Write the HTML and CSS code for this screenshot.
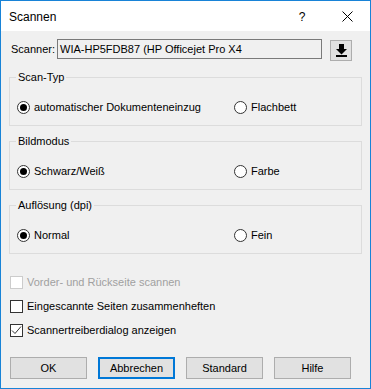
FILE: index.html
```html
<!DOCTYPE html>
<html>
<head>
<meta charset="utf-8">
<link rel="stylesheet" href="styles.css">
</head>
<body>
<div class="window">
  <div class="titlebar">
    <span class="title">Scannen</span>
    <span class="help">?</span>
    <span class="close">
      <svg width="11" height="11" viewBox="0 0 11 11"><path d="M0.5 0.5 L10.5 10.5 M10.5 0.5 L0.5 10.5" stroke="#000" stroke-width="1" fill="none"/></svg>
    </span>
  </div>
  <div class="content">
    <div class="scanner-row">
      <span class="scanner-label">Scanner:</span>
      <div class="textbox">WIA-HP5FDB87 (HP Officejet Pro X4</div>
      <div class="icon-btn">
        <svg width="11" height="13" viewBox="0 0 11 13"><rect x="3" y="0" width="5" height="5" fill="#000"/><path d="M0 5 H11 L5.5 10.5 Z" fill="#000"/><rect x="0" y="11" width="11" height="2" fill="#000"/></svg>
      </div>
    </div>

    <div class="group">
      <div class="legend">Scan-Typ</div>
      <div class="radio-row">
        <label class="radio-item"><span class="radio checked"></span>automatischer Dokumenteneinzug</label>
        <label class="radio-item second"><span class="radio"></span>Flachbett</label>
      </div>
    </div>

    <div class="group">
      <div class="legend">Bildmodus</div>
      <div class="radio-row">
        <label class="radio-item"><span class="radio checked"></span>Schwarz/Weiß</label>
        <label class="radio-item second"><span class="radio"></span>Farbe</label>
      </div>
    </div>

    <div class="group">
      <div class="legend">Auflösung (dpi)</div>
      <div class="radio-row">
        <label class="radio-item"><span class="radio checked"></span>Normal</label>
        <label class="radio-item second"><span class="radio"></span>Fein</label>
      </div>
    </div>

    <div class="checks">
      <label class="check-row disabled"><span class="checkbox"></span>Vorder- und Rückseite scannen</label>
      <label class="check-row"><span class="checkbox"></span>Eingescannte Seiten zusammenheften</label>
      <label class="check-row"><span class="checkbox"><svg width="11" height="11" viewBox="0 0 11 11"><path d="M1 5.5 L4 8.5 L10 1.5" stroke="#333" stroke-width="1" fill="none"/></svg></span>Scannertreiberdialog anzeigen</label>
    </div>

    <div class="buttons">
      <div class="btn">OK</div>
      <div class="btn default">Abbrechen</div>
      <div class="btn">Standard</div>
      <div class="btn">Hilfe</div>
    </div>
  </div>
</div>
</body>
</html>
```
FILE: styles.css
```css
html, body {
  margin: 0;
  padding: 0;
  background: #ffffff;
}
.window {
  width: 371px;
  height: 389px;
  box-sizing: border-box;
  border: 1px solid #1883d7;
  background: #f0f0f0;
  font-family: "Liberation Sans", Arial, sans-serif;
  font-size: 11px;
  color: #000;
  display: flex;
  flex-direction: column;
}
.titlebar {
  height: 30px;
  background: #ffffff;
  display: flex;
  align-items: center;
  flex-shrink: 0;
}
.title {
  font-size: 12px;
  margin-left: 8px;
  flex: 1;
  margin-top: 1px;
}
.help {
  font-size: 12px;
  width: 12px;
  text-align: center;
  margin-right: 34px;
  margin-top: 1px;
}
.close {
  display: flex;
  margin-right: 17px;
  margin-top: 1px;
}
.content {
  padding: 0 8px;
  display: flex;
  flex-direction: column;
}
.scanner-row {
  display: flex;
  align-items: flex-start;
  margin-top: 8px;
  height: 23px;
}
.scanner-label {
  width: 46px;
  margin-left: 2px;
  margin-top: 4px;
}
.textbox {
  width: 265px;
  height: 20px;
  box-sizing: border-box;
  border: 1px solid #7a7a7a;
  background: #f0f0f0;
  padding: 2px 2px;
  line-height: 14px;
  white-space: nowrap;
  overflow: hidden;
}
.icon-btn {
  margin-left: 8px;
  margin-top: 1px;
  width: 22px;
  height: 21px;
  box-sizing: border-box;
  border: 1px solid #adadad;
  background: #e1e1e1;
  display: flex;
  align-items: center;
  justify-content: center;
}
.group {
  margin-top: 15px;
  border: 1px solid #dcdcdc;
  height: 49px;
  box-sizing: border-box;
  display: flex;
  flex-direction: column;
}
.scanner-row + .group {
  margin-top: 15px;
}
.legend {
  margin-top: -7px;
  margin-left: 6px;
  padding: 0 2px;
  background: #f0f0f0;
  line-height: 13px;
  height: 13px;
  width: fit-content;
}
.radio-row {
  display: flex;
  margin-top: 17px;
  height: 13px;
  align-items: center;
}
.radio-item {
  display: flex;
  align-items: center;
  margin-left: 7px;
  width: 217px;
  line-height: 13px;
}
.radio-item.second {
  margin-left: 0;
  width: auto;
}
.radio {
  width: 13px;
  height: 13px;
  box-sizing: border-box;
  border: 1px solid #333;
  border-radius: 50%;
  background: #fff;
  margin-right: 4px;
  display: flex;
  align-items: center;
  justify-content: center;
  flex-shrink: 0;
}
.radio.checked::after {
  content: "";
  width: 7px;
  height: 7px;
  border-radius: 50%;
  background: #000;
}
.radio-item.second .radio {
  margin-right: 4px;
}
.checks {
  margin-top: 16px;
  display: flex;
  flex-direction: column;
}
.check-row {
  height: 24px;
  display: flex;
  align-items: center;
}
.checkbox {
  width: 13px;
  height: 13px;
  box-sizing: border-box;
  border: 1px solid #333;
  background: #fff;
  margin-left: 1px;
  margin-right: 4px;
  display: flex;
  align-items: center;
  justify-content: center;
  flex-shrink: 0;
}
.check-row.disabled {
  color: #a0a0a0;
}
.check-row.disabled .checkbox {
  border-color: #cccccc;
}
.buttons {
  margin-top: 15px;
  display: flex;
  gap: 11px;
  margin-left: 1px;
}
.btn {
  width: 77px;
  height: 22px;
  box-sizing: border-box;
  border: 1px solid #adadad;
  background: #e1e1e1;
  display: flex;
  align-items: center;
  justify-content: center;
}
.btn.default {
  border: 2px solid #0078d7;
}
```
